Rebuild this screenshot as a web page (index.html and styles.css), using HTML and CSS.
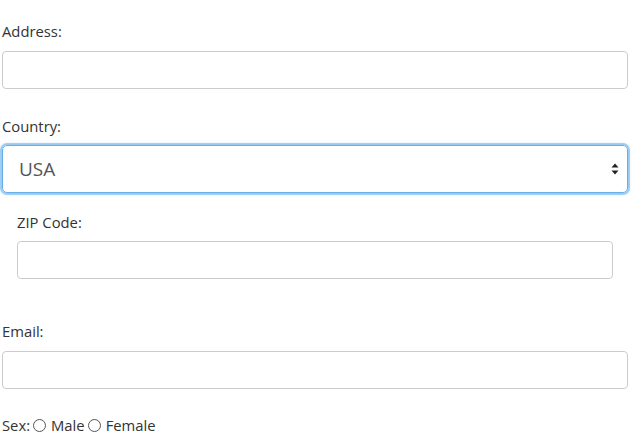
FILE: index.html
```html
<!DOCTYPE html>
<html>
<head>
<meta charset="utf-8">
<link rel="stylesheet" href="styles.css">
</head>
<body>
<form class="form">
  <div class="group group-address">
    <label class="label">Address:</label>
    <div class="field"></div>
  </div>
  <div class="group group-country">
    <label class="label">Country:</label>
    <div class="select">
      <span class="select-value">USA</span>
      <svg class="select-arrow" width="8" height="12" viewBox="0 0 8 12"><path d="M4 0.5 L7.5 4.5 L0.5 4.5 Z M4 11.5 L7.5 7.5 L0.5 7.5 Z" fill="#222"/></svg>
    </div>
  </div>
  <div class="group group-zip">
    <label class="label">ZIP Code:</label>
    <div class="field"></div>
  </div>
  <div class="group group-email">
    <label class="label">Email:</label>
    <div class="field"></div>
  </div>
  <div class="group group-sex">
    <span class="sex-label">Sex:</span>
    <label class="radio"><span class="radio-dot"></span>Male</label>
    <label class="radio"><span class="radio-dot"></span>Female</label>
  </div>
</form>
</body>
</html>
```

FILE: styles.css
```css
html, body {
  margin: 0;
  padding: 0;
  background: #fff;
}
body {
  font-family: "Open Sans", "Noto Sans", sans-serif;
  font-size: 14.8px;
  color: #333;
}
.form {
  padding: 0 10px 0 2px;
}
.group {
  display: flex;
  flex-direction: column;
}
.label {
  display: block;
  line-height: 20px;
  margin-bottom: 10px;
}
.field {
  height: 38px;
  box-sizing: border-box;
  border: 1px solid #ccc;
  border-radius: 4px;
  background: #fff;
}
.group-address { padding-top: 21px; }
.group-country { padding-top: 27px; }
.group-country .label { margin-bottom: 9px; }
.select {
  height: 48px;
  box-sizing: border-box;
  border: 1px solid #66afe9;
  border-radius: 5px;
  box-shadow: 0 0 0 2px rgba(102, 175, 233, 0.55), 0 0 4px rgba(102, 175, 233, 0.6);
  display: flex;
  align-items: center;
  justify-content: space-between;
  padding: 0 8px 0 16px;
}
.select-value {
  font-size: 19px;
  color: #555;
}
.select-arrow { display: block; }
.group-zip {
  padding: 19px 15px 0 15px;
}
.group-zip .label { margin-bottom: 9px; }
.group-email { padding-top: 42px; }
.group-sex {
  flex-direction: row;
  align-items: center;
  padding-top: 26px;
  line-height: 20px;
}
.sex-label { margin-right: 3px; }
.radio {
  display: flex;
  align-items: center;
  margin-right: 3px;
}
.radio-dot {
  width: 11px;
  height: 11px;
  border: 1px solid #555;
  border-radius: 50%;
  margin-right: 5px;
  margin-top: 1px;
}
```
